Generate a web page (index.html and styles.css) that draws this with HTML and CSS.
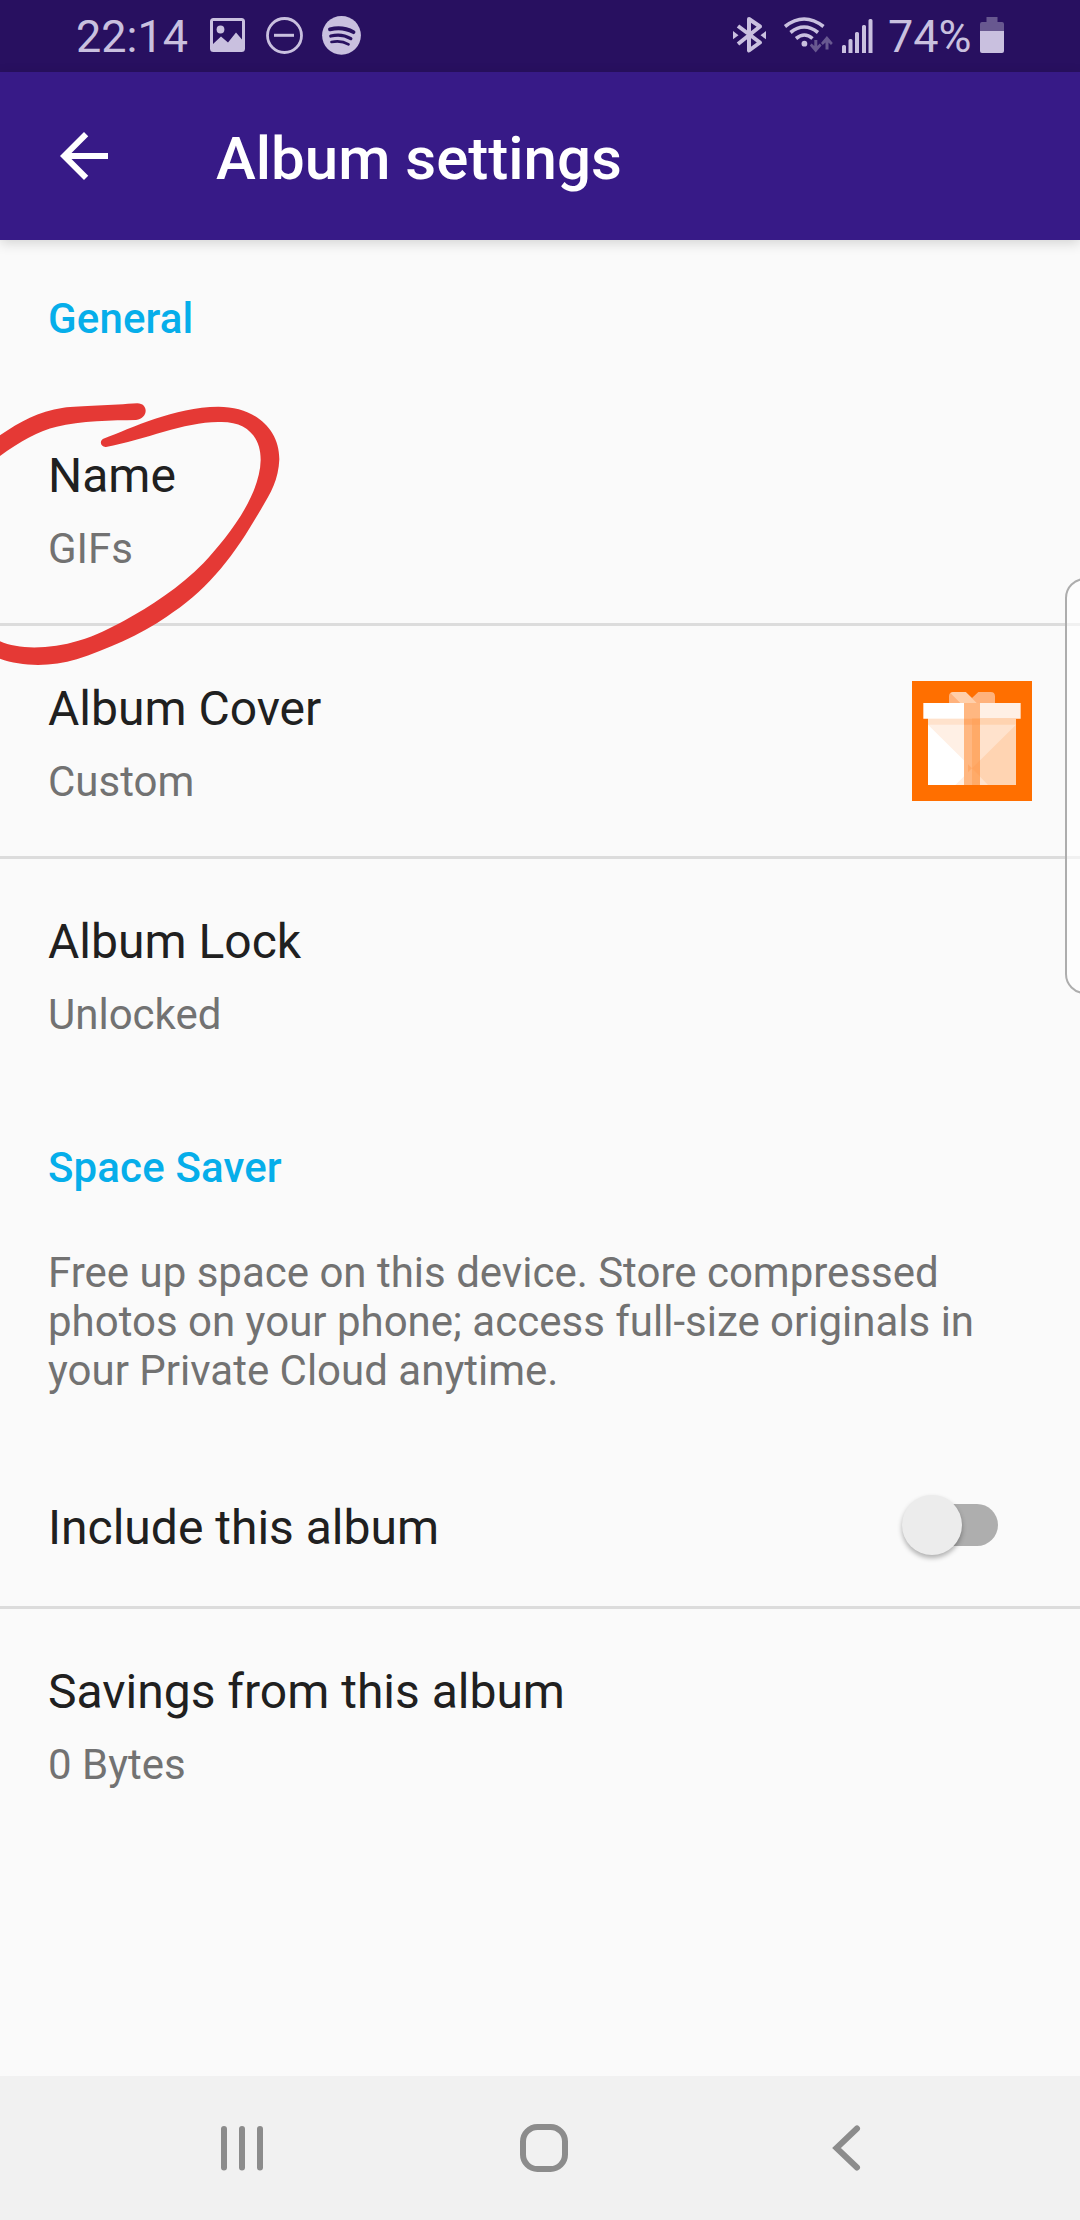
FILE: index.html
```html
<!DOCTYPE html>
<html lang="en">
<head>
<meta charset="utf-8">
<title>Album settings</title>
<link rel="stylesheet" href="styles.css">
</head>
<body>
<div class="screen">
  <header class="status">
    <div class="status-group">
      <span class="status-text">22:14</span>
      <svg class="glyph" width="150" height="72" viewBox="211 0 150 72">
        <path fill-rule="evenodd" d="M213.500 18h28q3.500 0 3.500 3.500v27q0 3.500-3.500 3.500h-28q-3.500 0-3.500-3.500v-27q0-3.500 3.500-3.500zM213 21v23l8-7.500 7 6 8-10 6 7V21z"/>
        <circle cx="220.500" cy="29.500" r="3.900"/>
        <circle class="line" cx="284.500" cy="35.500" r="17" stroke-width="2.800"/>
        <path d="M274 33.800h20v3h-20z"/>
        <circle cx="341.500" cy="35.300" r="19.400"/>
        <path class="cut" stroke-width="3.900" d="M330 29.300q12.500-3.200 23.500 2.800"/>
        <path class="cut" stroke-width="3.300" d="M330.800 36q11-2.800 20 2.600"/>
        <path class="cut" stroke-width="2.700" d="M331.500 42q9.500-2.100 17 2.300"/>
      </svg>
    </div>
    <div class="status-group">
      <svg class="glyph" width="156" height="72" viewBox="730 0 156 72">
        <path class="line" stroke-width="4" stroke-linejoin="round" d="M738 26l22 16.500-11 8V19l11 7.500-22 17.500"/>
        <path d="M733 31l5.500 4.300-5.500 4zM766 31l-5.500 4.300 5.500 4z"/>
        <path class="line" stroke-width="3.600" d="M785 26.500q19-15 38.500 0M790.500 32.500q13.500-11 27.500 0M796 38.500q8.500-7 16.500 0"/>
        <circle cx="804.400" cy="43.700" r="2.900"/>
        <g class="faint"><path d="M814.300 40h3v6l2.500-2.500 1.800 2-5.900 7-5.900-7 1.800-2 2.700 2.500zM825.500 49.500h3v-7l2.500 2.500 1.800-2-5.900-7-5.900 7 1.800 2 2.700-2.500z"/></g>
        <path d="M842 46.500q0-1.500 1.500-1.500h1q1.500 0 1.500 1.500V53h-4zM848.500 40.500q0-1.500 1.500-1.500h1q1.500 0 1.500 1.500V53h-4zM855 33.500q0-1.500 1.500-1.500h1q1.500 0 1.500 1.500V53h-4zM862 26.500q0-1.500 1.500-1.500h1q1.500 0 1.500 1.500V53h-4zM868.500 20.500q0-1.500 1.500-1.500h1q1.500 0 1.500 1.500V53h-4z"/>
      </svg>
      <span class="status-text">74%</span>
      <svg class="glyph" width="24" height="72" viewBox="980 0 24 72">
        <path class="faint" d="M986.500 17h11v5h4.500q2 0 2 2v7h-24v-7q0-2 2-2h4.500z"/>
        <path d="M980 31h24v20q0 2-2 2h-20q-2 0-2-2z"/>
      </svg>
    </div>
  </header>

  <div class="appbar">
    <svg class="back" width="72" height="72" viewBox="0 0 24 24"><path d="M20 11H7.830l5.590-5.590L12 4l-8 8 8 8 1.410-1.410L7.830 13H20v-2z"/></svg>
    <h1 class="title">Album settings</h1>
  </div>

  <main class="content">
    <h2 class="section">General</h2>
    <div class="row divided">
      <div class="labels"><div class="primary">Name</div><div class="secondary">GIFs</div></div>
    </div>
    <div class="row divided">
      <div class="labels"><div class="primary">Album Cover</div><div class="secondary">Custom</div></div>
      <svg width="120" height="120" viewBox="96 363 360 360">
        <path fill="#ff6f00" d="M96 363h360v360H96z"/>
        <path fill="#ffb27c" d="M207 429v-20q0-13 13-13h37l19 18 19-18h37q13 0 13 13v20z"/>
        <path fill="#ffcfaa" d="M212 400q4-4 9-4h36l33 33h-49z"/>
        <path fill="#fff" d="M130 429h122v47H130zM144 476h132v199H144z"/>
        <path fill="#fff0e5" d="M300 429h122v47H300zM144 494v-18h132v149z"/>
        <path fill="#fff0e5" d="M276 625l-50 50h50z"/>
        <path fill="#ffd4b2" d="M276 476h132v199H276z"/>
        <path fill="#ffe2cc" d="M276 476h132v18L276 625zM276 625l48 50h-48z"/>
        <path fill="#ffe2cc" d="M144 476h132v18H144z"/>
        <path fill="#ffd3b0" d="M276 476h132v18H276z"/>
        <path fill="#ffb781" d="M252 429h24v246h-24z"/>
        <path fill="#ffb781" d="M276 429h24v47h-24z"/>
        <path fill="#ffaa68" d="M276 476h24v199h-24z"/>
        <path fill="#ffa05a" d="M252 476h48v18h-48zM276 625l-12-12v24zM276 625l24-24v48z" opacity=".6"/>
      </svg>
    </div>
    <div class="row">
      <div class="labels"><div class="primary">Album Lock</div><div class="secondary">Unlocked</div></div>
    </div>
    <h2 class="section">Space Saver</h2>
    <p class="note">Free up space on this device. Store compressed photos on your phone; access full-size originals in your Private Cloud anytime.</p>
    <div class="row divided">
      <div class="labels single"><div class="primary">Include this album</div></div>
      <div class="switch"><div class="thumb"></div></div>
    </div>
    <div class="row">
      <div class="labels"><div class="primary">Savings from this album</div><div class="secondary">0 Bytes</div></div>
    </div>
  </main>

  <nav class="navbar">
    <svg width="54" height="54" viewBox="215 2121 54 54"><path d="M224 2129v38.500M242 2129v38.500M260 2129v38.500"/></svg>
    <svg width="54" height="54" viewBox="517 2121 54 54"><rect x="523" y="2127" width="42" height="42" rx="14.500"/></svg>
    <svg width="54" height="54" viewBox="819 2121 54 54"><path d="M857 2128.500L836.500 2148l20.500 19.500"/></svg>
  </nav>

  <svg class="marker" width="290" height="300" viewBox="0 0 870 900">
    <path d="M-6 170C60 125 110 95 190 83C240 78 340 75 412 70C446 70 446 116 408 120C340 121 240 122 170 140C115 152 55 188 -6 232z"/>
    <path d="M310 176C400 142 520 82 655 80C760 80 838 142 838 238C835 310 805 350 765 418C690 545 610 640 500 710C420 765 320 808 230 838C150 862 60 860 -6 834L-6 781C50 810 150 808 235 782C290 768 330 744 375 721C450 680 540 622 610 550C680 475 780 350 782 240C782 170 740 126 665 126C560 122 440 178 318 201C302 202 297 183 310 176z"/>
  </svg>
  <div class="edge"></div>
</div>
</body>
</html>
```
FILE: styles.css
```css
* { box-sizing: border-box; }
body { margin: 0; }
.screen {
  position: relative;
  display: flex;
  flex-direction: column;
  width: 1080px;
  height: 2220px;
  overflow: hidden;
  background: #fafafa;
  font-family: Roboto, sans-serif;
}
svg { display: block; flex: none; }
.status {
  display: flex;
  justify-content: space-between;
  height: 72px;
  padding: 0 76px 0 76px;
  background: #281060;
}
.status-group { display: flex; }
.status-text { font-size: 45px; line-height: 74px; color: #c9c0df; white-space: nowrap; }
.status-group:first-child .status-text { width: 135px; }
.status-group:last-child .status-text { width: 94px; padding-left: 2px; }
.glyph { fill: #c9c0df; overflow: visible; }
.line { fill: none; stroke: #c9c0df; }
.cut { fill: none; stroke: #281060; stroke-linecap: round; }
.faint { fill: #685890; }
.appbar {
  z-index: 1;
  display: flex;
  align-items: center;
  gap: 96px;
  height: 168px;
  padding-left: 48px;
  background: #371a87;
  box-shadow: 0 3px 12px rgba(0, 0, 0, .16);
}
.back { fill: #fff; }
.title { margin: 0; padding-top: 5px; font-size: 60px; line-height: 70px; font-weight: 500; color: #fff; }
.content { flex: 1; }
.section {
  margin: 0;
  padding: 54px 48px 50px;
  font-size: 42px;
  line-height: 49px;
  font-weight: 500;
  letter-spacing: .15px;
  color: #06aeea;
}
.row { display: flex; align-items: center; justify-content: space-between; padding: 0 48px; }
.divided { border-bottom: 3px solid #dcdcdc; }
.labels { display: flex; flex-direction: column; gap: 20px; padding: 55px 0 50px; }
.single { padding-bottom: 50px; }
.primary { font-size: 48px; line-height: 56px; color: #202020; }
.secondary { font-size: 42px; line-height: 49px; color: #727272; }
.note { margin: 0; padding: 6px 96px 50px 48px; font-size: 42px; line-height: 49px; color: #727272; }
.switch {
  display: flex;
  align-items: center;
  width: 84px;
  height: 42px;
  margin: 0 34px 1px 0;
  border-radius: 21px;
  background: #aeaeae;
}
.thumb {
  flex: none;
  width: 60px;
  height: 60px;
  margin-left: -12px;
  border-radius: 50%;
  background: #ececec;
  box-shadow: 0 3px 5px rgba(0, 0, 0, .3);
}
.navbar {
  display: flex;
  align-items: center;
  gap: 248px;
  height: 144px;
  padding-left: 215px;
  background: #f1f1f1;
}
.navbar svg { fill: none; stroke: #8c8c8c; stroke-width: 6px; stroke-linecap: round; }
.marker { position: absolute; left: 0; top: 380px; fill: #e53935; }
.edge {
  position: absolute;
  left: 1065px;
  top: 578px;
  width: 40px;
  height: 416px;
  border: 2px solid #adadad;
  border-radius: 20px;
  background: rgba(255, 255, 255, .6);
}
```
